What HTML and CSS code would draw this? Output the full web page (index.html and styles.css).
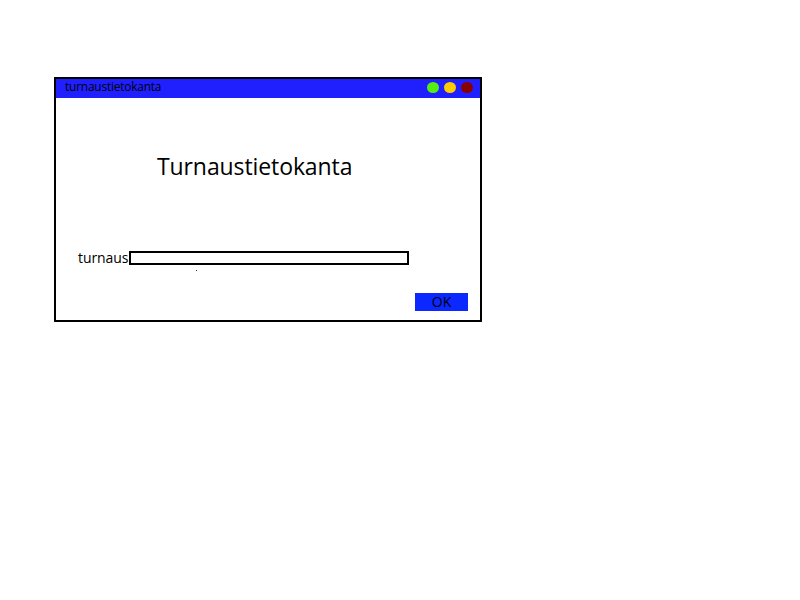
FILE: index.html
```html
<!DOCTYPE html>
<html>
<head>
<meta charset="utf-8">
<link rel="stylesheet" href="styles.css">
</head>
<body>
<div class="window">
  <div class="titlebar">
    <span class="title">turnaustietokanta</span>
    <div class="controls">
      <span class="dot green"></span>
      <span class="dot yellow"></span>
      <span class="dot red"></span>
    </div>
  </div>
  <div class="content">
    <h1 class="heading">Turnaustietokanta</h1>
    <div class="field">
      <label class="label">turnaus</label>
      <div class="input"></div>
    </div>
    <div class="speck"></div>
    <div class="actions">
      <div class="ok">OK</div>
    </div>
  </div>
</div>
</body>
</html>
```

FILE: styles.css
```css
html, body {
  margin: 0;
  padding: 0;
  background: #fff;
}
body {
  font-family: "Open Sans", "Liberation Sans", sans-serif;
  color: #000;
}
.window {
  margin: 77px 0 0 54px;
  width: 428px;
  height: 245px;
  box-sizing: border-box;
  border: 2px solid #000;
  display: flex;
  flex-direction: column;
}
.titlebar {
  height: 19px;
  background: #2020ff;
  display: flex;
  align-items: flex-start;
  justify-content: space-between;
  padding: 0 7px 0 9px;
}
.title {
  font-size: 12px;
  letter-spacing: -0.25px;
  line-height: 16px;
  color: #000;
}
.controls {
  display: flex;
  gap: 5px;
  align-items: center;
  padding-top: 3px;
}
.dot {
  width: 12px;
  height: 11px;
  border-radius: 50%;
  display: block;
}
.green { background: #55ee11; }
.yellow { background: #ffcc00; }
.red { background: #880000; }
.content {
  flex: 1;
  display: flex;
  flex-direction: column;
}
.heading {
  margin: 53px 0 0 101px;
  font-weight: normal;
  font-size: 23px;
  letter-spacing: -0.1px;
  line-height: 30px;
}
.field {
  display: flex;
  align-items: center;
  margin: 69px 0 0 22px;
  gap: 1px;
}
.label {
  font-size: 14px;
  letter-spacing: -0.1px;
  line-height: 16px;
}
.input {
  width: 276px;
  height: 10px;
  border: 2px solid #000;
  background: #fff;
}
.speck {
  width: 1px;
  height: 1px;
  background: #333;
  margin: 4px 0 0 140px;
}
.actions {
  display: flex;
  justify-content: flex-end;
  margin: 22px 12px 0 0;
}
.ok {
  width: 53px;
  height: 18px;
  background: #0a28ff;
  font-size: 14px;
  line-height: 18px;
  text-align: center;
}
```
